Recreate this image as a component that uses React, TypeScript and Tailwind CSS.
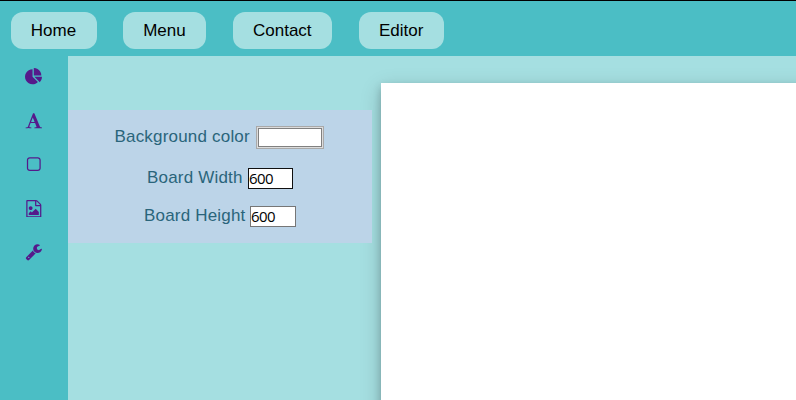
import React from "react";

const navItems = [
  { label: "Home", size: "w-[86px] pr-px" },
  { label: "Menu", size: "w-[83px] pr-px" },
  { label: "Contact", size: "w-[99px] ml-[0.5px] pr-px" },
  { label: "Editor", size: "w-[85px]" },
];

const tools = [
  {
    name: "Chart",
    d: "M768 890l546 546q-106 108-247.5 168t-298.5 60q-209 0-385.5-103t-279.5-279.5-103-385.5 103-385.5 279.5-279.5 385.5-103v762zm187 6h773q0 157-60 298.5t-168 247.5zm709-128h-768v-768q209 0 385.5 103t279.5 279.5 103 385.5z",
  },
  {
    name: "Text",
    d: "M789 559l-170 450q33 0 136.5 2t160.5 2q19 0 57-2-87-253-184-452zm-725 1105l2-79q23-7 56-12.5t57-10.5 49.5-14.5 44.5-29 31-50.5l237-616 280-724h128q8 14 11 21l205 480q33 78 106 257.5t114 274.5q15 34 58 144.5t72 168.5q20 45 35 57 19 15 88 29.5t84 20.5q6 38 6 57 0 5-.5 13.5t-.5 12.5q-63 0-190-8t-191-8q-76 0-215 7t-178 8q0-43 4-78l131-28q1 0 12.5-2.5t15.5-3.5 14.5-4.5 15-6.5 11-8 9-11 2.5-14q0-16-31-96.5t-72-177.5-42-100l-450-2q-26 58-76.5 195.5t-50.5 162.5q0 22 14 37.5t43.5 24.5 48.5 13.5 57 8.5 41 4q1 19 1 58 0 9-2 27-58 0-174.5-10t-174.5-10q-8 0-26.5 4t-21.5 4q-80 14-188 14z",
  },
  {
    name: "Shape",
    d: "M1312 256h-832q-66 0-113 47t-47 113v832q0 66 47 113t113 47h832q66 0 113-47t47-113v-832q0-66-47-113t-113-47zm288 160v832q0 119-84.5 203.5t-203.5 84.5h-832q-119 0-203.5-84.5t-84.5-203.5v-832q0-119 84.5-203.5t203.5-84.5h832q119 0 203.5 84.5t84.5 203.5z",
  },
  {
    name: "Image",
    d: "M1596 380q28 28 48 76t20 88v1152q0 40-28 68t-68 28h-1344q-40 0-68-28t-28-68v-1600q0-40 28-68t68-28h896q40 0 88 20t76 48zm-444-244v376h376q-10-29-22-41l-313-313q-12-12-41-22zm384 1528v-1024h-416q-40 0-68-28t-28-68v-416h-768v1536h1280zm-128-448v320h-1024v-192l192-192 128 128 384-384zm-832-192q-80 0-136-56t-56-136 56-136 136-56 136 56 56 136-56 136-136 56z",
  },
  {
    name: "Settings",
    d: "M448 1472q0-26-19-45t-45-19-45 19-19 45 19 45 45 19 45-19 19-45zm644-420l-682 682q-37 37-90 37-52 0-91-37l-106-108q-38-36-38-90 0-53 38-91l681-681q39 98 114.5 173.5t173.5 114.5zm634-435q0 39-23 106-47 134-164.5 217.5t-258.5 83.5q-185 0-316.5-131.5t-131.5-316.5 131.5-316.5 316.5-131.5q58 0 121.5 16.5t107.5 46.5q16 11 16 28t-16 28l-293 169v224l193 107q5-3 79-48.5t135.5-81 70.5-35.5q15 0 23.5 10t8.5 25z",
  },
];

function NavBar() {
  return (
    <nav className="flex h-14 shrink-0 items-start border-t border-black bg-[#4bbec5] pl-[11px] pt-[11px]">
      <div className="flex gap-[26.4px]">
        {navItems.map((item) => (
          <a
            key={item.label}
            className={`${item.size} flex h-[37px] items-center justify-center rounded-xl bg-[#a5dfe1] text-[17px] text-black`}
          >
            {item.label}
          </a>
        ))}
      </div>
    </nav>
  );
}

function ToolBar() {
  return (
    <aside className="flex w-[68px] shrink-0 flex-col items-center gap-[26.2px] bg-[#4bbec5] pt-[12.3px]">
      {tools.map((tool) => (
        <svg key={tool.name} viewBox="0 0 1792 1792" className="size-[17.6px] shrink-0 fill-[#551a8b]">
          <path d={tool.d} />
        </svg>
      ))}
    </aside>
  );
}

function BoardSettings() {
  return (
    <section className="relative z-10 mt-[54px] h-[133px] w-[304px] shrink-0 bg-[#bcd4e8] pt-4 text-[17px] tracking-[0.19px] text-[#2a657b]">
      <div className="flex h-[23px] items-center pl-[46.5px]">
        <label className="-mt-[2px] w-[141.5px] leading-5">Background color</label>
        <span className="h-[23px] w-[68px] border border-[#a9a9a9] bg-[#dcdcdc] p-px">
          <span className="block h-full border border-[#808080] bg-white" />
        </span>
      </div>
      <div className="mt-[19px] flex h-[21px] items-center pl-[79px]">
        <label className="-mt-[2px] w-[101px] leading-5">Board Width</label>
        <input
          className="h-[21px] w-[45px] border border-[#101010] bg-white font-['Open_Sans',sans-serif] text-[15px] tracking-[-0.6px] text-black outline-none"
          defaultValue="600"
        />
      </div>
      <div className="mt-[17px] flex h-[21px] items-center pl-[76px]">
        <label className="-mt-[2px] w-[106px] leading-5">Board Height</label>
        <input
          className="h-[21px] w-[46px] border border-[#767676] bg-white font-['Open_Sans',sans-serif] text-[15px] tracking-[-0.6px] text-black outline-none"
          defaultValue="600"
        />
      </div>
    </section>
  );
}

export default function App() {
  return (
    <div className="flex h-[400px] w-[796px] flex-col overflow-hidden bg-[#a5dfe1] font-['Liberation_Sans',Arial,sans-serif]">
      <NavBar />
      <main className="flex min-h-0 flex-1">
        <ToolBar />
        <BoardSettings />
        <div className="ml-[9px] mt-[27px] h-[600px] w-[600px] shrink-0 bg-white shadow-[0_4px_8px_0_rgba(0,0,0,0.2),0_6px_20px_0_rgba(0,0,0,0.19)]" />
      </main>
    </div>
  );
}
